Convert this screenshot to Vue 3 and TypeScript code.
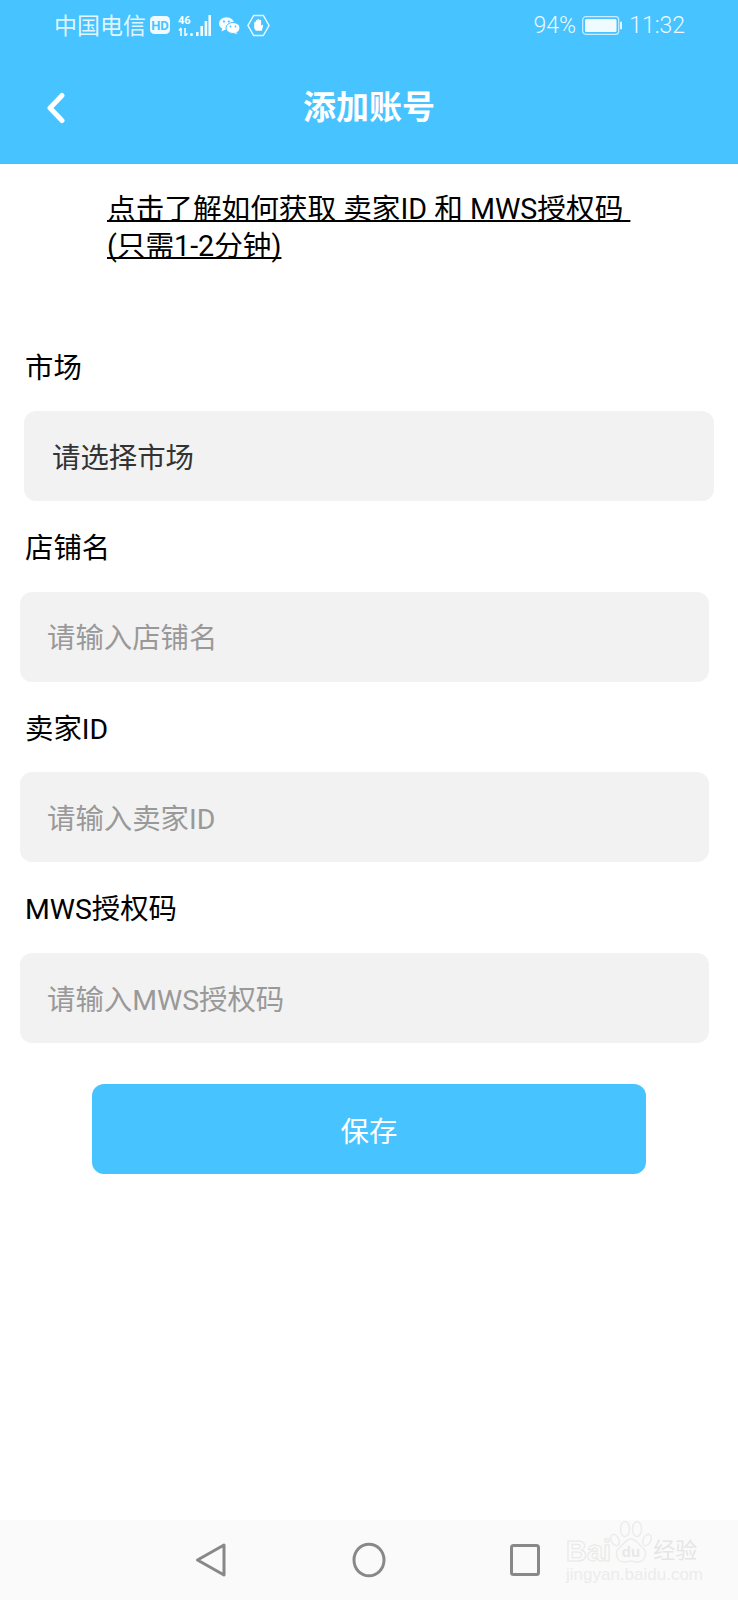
<script setup lang="ts">
interface Field { label: string; hint: string }
const fields: Field[] = [
  { label: '店铺名', hint: '请输入店铺名' },
  { label: '卖家ID', hint: '请输入卖家ID' },
  { label: 'MWS授权码', hint: '请输入MWS授权码' },
]
</script>

<template>
  <div class="page">
    <header class="head">
      <div class="status">
        <div class="status-left">
          <span class="carrier">中国电信</span>
          <svg class="ic-hd" width="20" height="18" viewBox="0 0 20 18">
            <rect x="0" y="0" width="20" height="18" rx="4.500" fill="#fff" fill-opacity=".92" />
            <text x="10" y="13.500" text-anchor="middle" class="hd-text">HD</text>
          </svg>
          <svg class="ic-signal" width="33" height="21" viewBox="0 0 33 21">
            <text x="0" y="8.500" class="sig-text">46</text>
            <path d="M3 13v8M1 15.500l2-2.500M7 13v8M9.500 18.500L7 21" stroke="#fff" stroke-width="1.600" fill="none" opacity=".9" />
            <g fill="#fff" fill-opacity=".92">
              <rect x="18" y="17" width="2.600" height="4" />
              <rect x="22.400" y="11" width="2.600" height="10" />
              <rect x="26.600" y="6" width="2.600" height="15" />
              <rect x="30.400" y="0" width="2.600" height="21" />
              <circle cx="13.500" cy="19.500" r="1.500" />
            </g>
          </svg>
          <svg class="ic-wechat" width="21" height="17" viewBox="0 0 21 17">
            <ellipse cx="7.500" cy="6.500" rx="7.500" ry="6.300" fill="#fff" fill-opacity=".95" />
            <path d="M3.500 11l-1 3.500 4-2z" fill="#fff" />
            <ellipse cx="14" cy="11" rx="7" ry="5.500" fill="#fff" stroke="#47c4ff" stroke-width="1" />
            <path d="M17 15l1.500 2-4-1z" fill="#fff" />
            <circle cx="5" cy="4.500" r="1.100" fill="#47c4ff" />
            <circle cx="9.800" cy="4.500" r="1.100" fill="#47c4ff" />
            <circle cx="11.500" cy="9.500" r=".9" fill="#47c4ff" />
            <circle cx="16.500" cy="9.500" r=".9" fill="#47c4ff" />
          </svg>
          <svg class="ic-hand" width="23" height="23" viewBox="0 0 24 24">
            <path d="M7 1.500h10L23 12l-6 10.500H7L1 12z" fill="none" stroke="#fff" stroke-opacity=".9" stroke-width="1.500" />
            <path d="M7.500 9c0-1.300 1.700-1.300 1.700 0V7c0-1.300 1.800-1.300 1.800 0v-.8c0-1.300 1.900-1.300 1.900 0V7c0-1.300 1.800-1.300 1.800 0v5.500l.6-.8c.8-.9 2 0 1.400 1L15.500 17.500H9.500c-1.300-1-2-2.300-2-4z" fill="#fff" />
          </svg>
        </div>
        <div class="status-right">
          <span>94%</span>
          <svg class="ic-batt" width="40" height="19" viewBox="0 0 40 19">
            <rect x=".7" y=".7" width="36" height="17.600" rx="3" fill="none" stroke="#fff" stroke-opacity=".7" stroke-width="1.200" />
            <rect x="3" y="3" width="31.500" height="13" rx="1.500" fill="#fff" fill-opacity=".92" />
            <rect x="38" y="5.500" width="2" height="8" rx="1" fill="#fff" fill-opacity=".85" />
          </svg>
          <span>11:32</span>
        </div>
      </div>
      <div class="title-bar">
        <svg class="back" width="22" height="32" viewBox="0 0 22 32">
          <path d="M17 3.500 5 16l12 12.500" fill="none" stroke="#fff" stroke-width="5" stroke-linecap="round" stroke-linejoin="round" />
        </svg>
        <h1 class="title">添加账号</h1>
      </div>
    </header>

    <main class="body">
      <a class="link">点击了解如何获取 卖家ID 和 MWS授权码&nbsp;<br />(只需1-2分钟)</a>

      <div class="label first">市场</div>
      <div class="box box-select">请选择市场</div>

      <template v-for="f in fields" :key="f.label">
        <div class="label">{{ f.label }}</div>
        <div class="box box-input">{{ f.hint }}</div>
      </template>

      <button class="save" type="button">保存</button>
    </main>

    <footer class="nav">
      <svg class="nav-ic" width="32" height="36" viewBox="0 0 32 36">
        <path d="M29 3 2.500 18 29 33z" fill="none" stroke="#888" stroke-width="3" stroke-linejoin="round" />
      </svg>
      <svg class="nav-ic" width="34" height="36" viewBox="0 0 34 36">
        <ellipse cx="17" cy="18" rx="15" ry="15.800" fill="none" stroke="#888" stroke-width="3" />
      </svg>
      <svg class="nav-ic" width="30" height="32" viewBox="0 0 30 32">
        <rect x="1.500" y="1.500" width="27" height="29" rx="2" fill="none" stroke="#888" stroke-width="3" />
      </svg>
      <div class="mark">
        <div class="mark-top">
          <span class="bai">Bai</span>
          <svg class="paw" width="42" height="44" viewBox="0 0 42 44">
            <g fill="none" stroke="#ececec" stroke-width="1.500">
              <ellipse cx="5" cy="20" rx="3.800" ry="6" transform="rotate(-25 5 20)" />
              <ellipse cx="15" cy="9" rx="4.500" ry="7.500" />
              <ellipse cx="27" cy="9" rx="4.500" ry="7.500" />
              <ellipse cx="37" cy="20" rx="3.800" ry="6" transform="rotate(25 37 20)" />
              <path d="M21 19c5 0 7 5 12 9 5 5 2 14-5 14-3 0-5-1-7-1s-4 1-7 1c-7 0-10-9-5-14 5-4 7-9 12-9z" />
            </g>
            <text x="21" y="37" text-anchor="middle" class="paw-du">du</text>
          </svg>
          <span class="jy">经验</span>
        </div>
        <div class="mark-url">jingyan.baidu.com</div>
      </div>
    </footer>
  </div>
</template>

<style scoped>
.page {
  width: 738px;
  height: 1600px;
  display: flex;
  flex-direction: column;
  background: #fff;
  font-family: Roboto, "Noto Sans CJK SC", sans-serif;
  color: #000;
  overflow: hidden;
}
.head {
  height: 164px;
  background: #47c4ff;
  color: #fff;
  flex: none;
}
.status {
  height: 52px;
  padding: 0 53px 2px 54px;
  box-sizing: border-box;
  display: flex;
  justify-content: space-between;
  align-items: center;
  font-size: 23px;
  color: rgba(255, 255, 255, 0.85);
}
.status-left, .status-right { display: flex; align-items: center; }
.status-right { font-weight: 300; font-size: 23px; color: rgba(255, 255, 255, 0.92); }
.carrier { margin-right: 4px; margin-top: -3px; }
.ic-signal { margin-left: 8px; }
.ic-wechat { margin-left: 8px; }
.ic-hand { margin-left: 7px; }
.hd-text { font: 700 13px Roboto, sans-serif; fill: #47c4ff; }
.sig-text { font: 700 11px Roboto, sans-serif; fill: #fff; }
.ic-batt { margin: 0 7px 0 6px; }
.title-bar {
  height: 112px;
  display: flex;
  align-items: center;
  justify-content: center;
  position: relative;
}
.back { position: absolute; left: 45px; top: 40px; }
.title {
  margin: 0;
  font-size: 33px;
  font-weight: 700;
  line-height: 112px;
}
.body {
  flex: 1;
  display: flex;
  flex-direction: column;
  padding-top: 27px;
}
.link {
  display: block;
  margin-left: 107px;
  font-size: 28.650px;
  line-height: 36.500px;
  text-decoration: underline;
  text-decoration-thickness: 2px;
  text-decoration-skip-ink: none;
  white-space: nowrap;
  color: #000;
}
.label {
  height: 90.700px;
  margin-left: 25px;
  font-size: 28.400px;
  line-height: 36px;
  padding-top: 30px;
  box-sizing: border-box;
}
.first { margin-top: 87px; height: 60px; padding-top: 0; }
.box {
  height: 90px;
  background: #f2f2f2;
  border-radius: 12px;
  display: flex;
  align-items: center;
  font-size: 28.400px;
  padding: 0 0 2px 28px;
  box-sizing: border-box;
}
.box-select { margin: 0 24px; color: #333; }
.box-input { margin: 0 29px 0 20px; color: #999; padding-left: 27px; }
.save {
  margin: 41px 0 0 92px;
  width: 554px;
  height: 90px;
  border: 0;
  border-radius: 12px;
  background: #47c4ff;
  color: #fff;
  font: 28.400px Roboto, "Noto Sans CJK SC", sans-serif;
}
.nav {
  height: 80px;
  flex: none;
  background: #fafafa;
  display: flex;
  align-items: center;
  position: relative;
  padding-left: 195px;
}
.nav-ic:nth-child(1) { margin-right: 125px; }
.nav-ic:nth-child(2) { margin-right: 124px; }
.mark {
  position: absolute;
  left: 566px;
  top: 0;
  color: #ececec;
  font-family: "Liberation Sans", "Noto Sans CJK SC", sans-serif;
}
.mark-top { display: flex; align-items: flex-end; height: 44px; }
.bai {
  font-size: 29px;
  font-weight: 700;
  line-height: 26px;
  color: #fafafa;
  -webkit-text-stroke: 1px #e8e8e8;
}
.paw { margin: 0 1px 0 -1px; }
.paw-du { font: 700 15px "Liberation Sans", sans-serif; fill: #e8e8e8; }
.jy {
  font-size: 22px;
  line-height: 26px;
  color: #e6e6e6;
}
.mark-url { font-size: 17px; line-height: 20px; margin-top: 1px; }
</style>

<style>
html, body { margin: 0; background: #fff; }
</style>
